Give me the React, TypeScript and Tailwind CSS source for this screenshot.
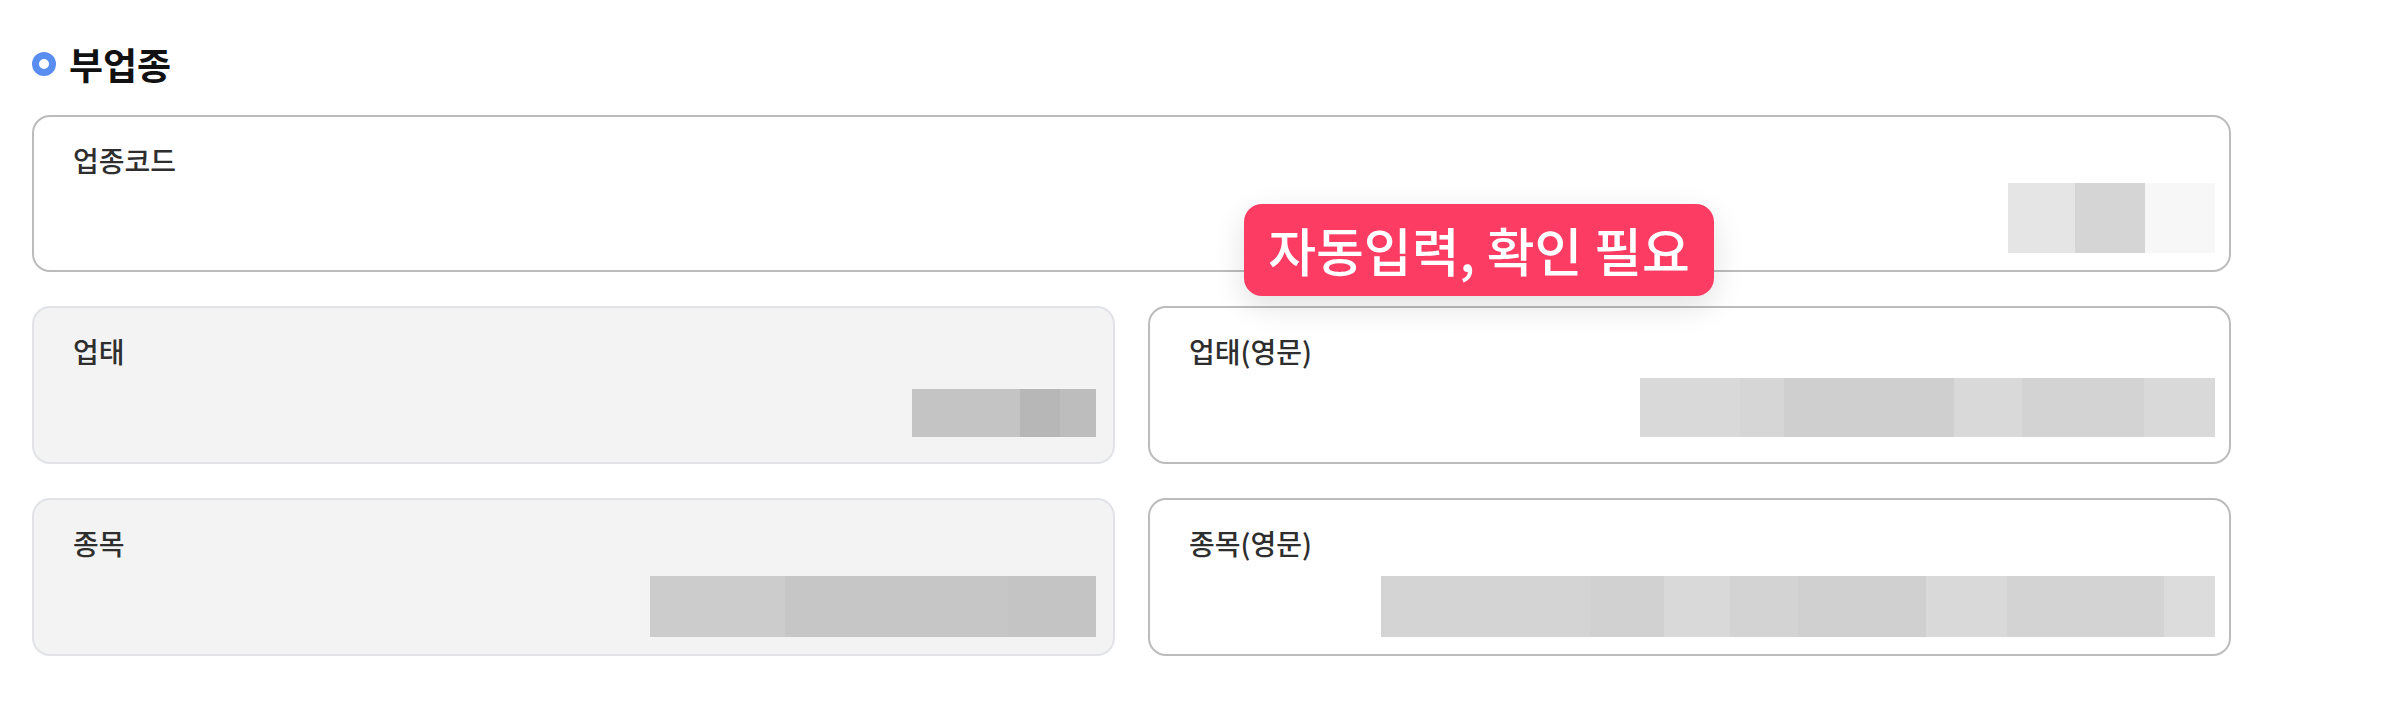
type Block = { cls: string };

type Field = {
  label: string;
  readOnly?: boolean;
  height: string;
  blocksWrap: string;
  blocks: Block[];
};

const codeField: Field = {
  label: "업종코드",
  height: "h-[157px]",
  blocksWrap: "mr-[14px] mb-[17px] h-[70px]",
  blocks: [
    { cls: "w-[67px] bg-[#e5e5e5]" },
    { cls: "w-[70px] bg-[#d5d5d5]" },
    { cls: "w-[70px] bg-[#f7f7f7]" },
  ],
};

// 행 단위로 (국문 / 영문)
const rows: Field[][] = [
  [
    {
      label: "업태",
      readOnly: true,
      height: "h-[158px]",
      blocksWrap: "mr-[17px] mb-[25px] h-[48px]",
      blocks: [
        { cls: "w-[108px] bg-[#c4c4c4]" },
        { cls: "w-[40px] bg-[#b7b7b7]" },
        { cls: "w-[36px] bg-[#bdbdbd]" },
      ],
    },
    {
      label: "업태(영문)",
      height: "h-[158px]",
      blocksWrap: "mr-[14px] mb-[25px] h-[59px]",
      blocks: [
        { cls: "w-[100px] bg-[#d9d9d9]" },
        { cls: "w-[44px] bg-[#d6d6d6]" },
        { cls: "w-[170px] bg-[#cfcfcf]" },
        { cls: "w-[68px] bg-[#d9d9d9]" },
        { cls: "w-[122px] bg-[#d3d3d3]" },
        { cls: "w-[71px] bg-[#d9d9d9]" },
      ],
    },
  ],
  [
    {
      label: "종목",
      readOnly: true,
      height: "h-[158px]",
      blocksWrap: "mr-[17px] mb-[17px] h-[61px]",
      blocks: [
        { cls: "w-[135px] bg-[#cccccc]" },
        { cls: "w-[223px] bg-[#c6c6c6]" },
        { cls: "w-[88px] bg-[#c4c4c4]" },
      ],
    },
    {
      label: "종목(영문)",
      height: "h-[158px]",
      blocksWrap: "mr-[14px] mb-[17px] h-[61px]",
      blocks: [
        { cls: "w-[209px] bg-[#d4d4d4]" },
        { cls: "w-[74px] bg-[#d1d1d1]" },
        { cls: "w-[66px] bg-[#d9d9d9]" },
        { cls: "w-[68px] bg-[#d3d3d3]" },
        { cls: "w-[128px] bg-[#d0d0d0]" },
        { cls: "w-[81px] bg-[#d9d9d9]" },
        { cls: "w-[157px] bg-[#d3d3d3]" },
        { cls: "w-[51px] bg-[#dcdcdc]" },
      ],
    },
  ],
];

const FieldCard = ({ field }: { field: Field }) => {
  const tone = field.readOnly
    ? "bg-[#f3f3f3] border-[#e1e3e7]"
    : "bg-white border-[#bcbcbc]";
  return (
    <div
      className={`flex flex-col rounded-[18px] border-2 pl-[39px] pt-[26px] ${field.height} ${tone}`}
    >
      <p className="text-[28px] leading-[34px] font-medium text-[#2e2e2e]">
        {field.label}
      </p>
      <div className={`mt-auto flex justify-end ${field.blocksWrap}`}>
        {field.blocks.map((b, i) => (
          <div key={i} className={`h-full ${b.cls}`} />
        ))}
      </div>
    </div>
  );
};

const App = () => {
  return (
    <div
      className="min-h-[708px] bg-white pt-[42px] pl-[32px]"
      style={{ fontFamily: '"Noto Sans CJK KR", "Noto Sans", sans-serif' }}
    >
      <div className="flex items-center gap-[13px] h-[44px]">
        <span className="w-6 h-6 rounded-full border-[7px] border-[#5a8df0] bg-white" />
        <h2 className="text-[37px] leading-[44px] font-bold text-[#111111]">
          부업종
        </h2>
      </div>

      <div className="relative w-[2199px] mt-[29px] flex flex-col gap-[34px]">
        <FieldCard field={codeField} />
        {rows.map((row, i) => (
          <div key={i} className="grid grid-cols-2 gap-[33px]">
            {row.map((f) => (
              <FieldCard key={f.label} field={f} />
            ))}
          </div>
        ))}

        {/* 자동입력 안내 툴팁 */}
        <div className="absolute left-[1212px] top-[89px] w-[470px] h-[92px] flex items-center justify-center rounded-[18px] bg-[#fd3c64] shadow-[0_10px_30px_rgba(0,0,0,0.12)]">
          <span className="text-[52px] leading-none font-medium text-white whitespace-nowrap">
            자동입력, 확인 필요
          </span>
        </div>
      </div>
    </div>
  );
};

export default App;
